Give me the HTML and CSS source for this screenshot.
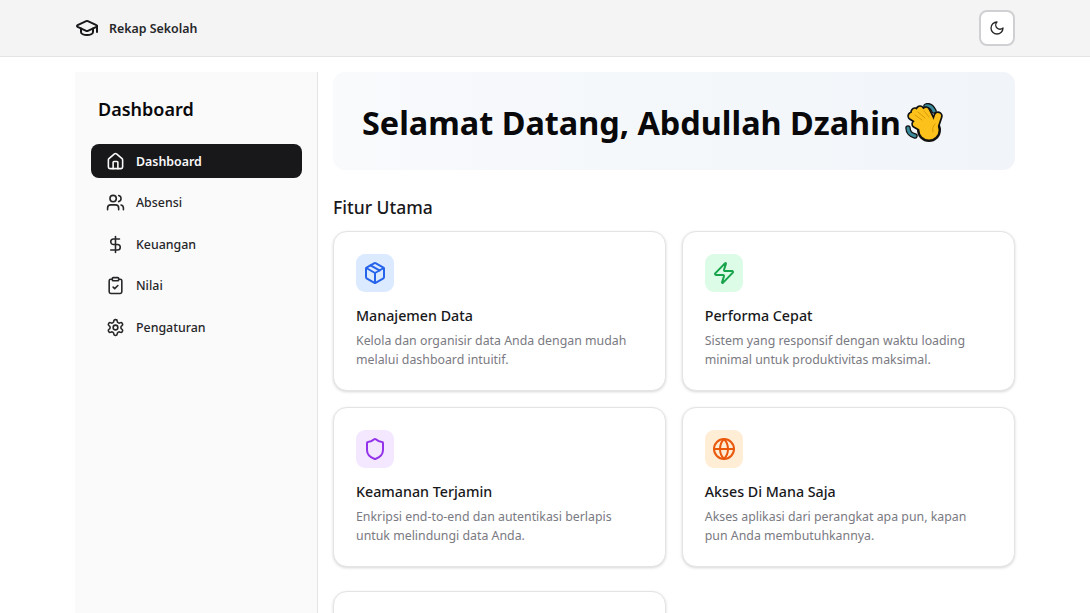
FILE: index.html
```html
<!DOCTYPE html>
<html lang="id">
<head>
    <meta charset="UTF-8">
    <meta name="viewport" content="width=device-width, initial-scale=1.0">
    <title>Rekap Sekolah</title>
    <link rel="stylesheet" href="styles.css">
</head>
<body>
    <header class="topbar">
        <div class="brand">
            <svg class="icon brand-icon" viewBox="0 0 24 24"><path d="M21.42 10.922a1 1 0 0 0-.019-1.838L12.83 5.18a2 2 0 0 0-1.66 0L2.6 9.08a1 1 0 0 0 0 1.832l8.57 3.908a2 2 0 0 0 1.66 0z"/><path d="M22 10v6"/><path d="M6 12.5V16a6 3 0 0 0 12 0v-3.5"/></svg>
            <span>Rekap Sekolah</span>
        </div>
        <button class="theme-btn">
            <svg class="icon" viewBox="0 0 24 24"><path d="M12 3a6 6 0 0 0 9 9 9 9 0 1 1-9-9Z"/></svg>
        </button>
    </header>

    <div class="layout">
        <aside class="sidebar">
            <h2 class="sidebar-title">Dashboard</h2>
            <nav class="nav">
                <a class="nav-item active">
                    <svg class="icon" viewBox="0 0 24 24"><path d="M15 21v-8a1 1 0 0 0-1-1h-4a1 1 0 0 0-1 1v8"/><path d="M3 10a2 2 0 0 1 .709-1.528l7-5.999a2 2 0 0 1 2.582 0l7 5.999A2 2 0 0 1 21 10v9a2 2 0 0 1-2 2H5a2 2 0 0 1-2-2z"/></svg>
                    Dashboard
                </a>
                <a class="nav-item">
                    <svg class="icon" viewBox="0 0 24 24"><path d="M16 21v-2a4 4 0 0 0-4-4H6a4 4 0 0 0-4 4v2"/><circle cx="9" cy="7" r="4"/><path d="M22 21v-2a4 4 0 0 0-3-3.87"/><path d="M16 3.13a4 4 0 0 1 0 7.75"/></svg>
                    Absensi
                </a>
                <a class="nav-item">
                    <svg class="icon" viewBox="0 0 24 24"><line x1="12" x2="12" y1="2" y2="22"/><path d="M17 5H9.5a3.5 3.5 0 0 0 0 7h5a3.5 3.5 0 0 1 0 7H6"/></svg>
                    Keuangan
                </a>
                <a class="nav-item">
                    <svg class="icon" viewBox="0 0 24 24"><rect width="8" height="4" x="8" y="2" rx="1"/><path d="M16 4h2a2 2 0 0 1 2 2v14a2 2 0 0 1-2 2H6a2 2 0 0 1-2-2V6a2 2 0 0 1 2-2h2"/><path d="m9 14 2 2 4-4"/></svg>
                    Nilai
                </a>
                <a class="nav-item">
                    <svg class="icon" viewBox="0 0 24 24"><path d="M12.22 2h-.44a2 2 0 0 0-2 2v.18a2 2 0 0 1-1 1.73l-.43.25a2 2 0 0 1-2 0l-.15-.08a2 2 0 0 0-2.73.73l-.22.38a2 2 0 0 0 .73 2.73l.15.1a2 2 0 0 1 1 1.72v.51a2 2 0 0 1-1 1.74l-.15.09a2 2 0 0 0-.73 2.73l.22.38a2 2 0 0 0 2.73.73l.15-.08a2 2 0 0 1 2 0l.43.25a2 2 0 0 1 1 1.73V20a2 2 0 0 0 2 2h.44a2 2 0 0 0 2-2v-.18a2 2 0 0 1 1-1.73l.43-.25a2 2 0 0 1 2 0l.15.08a2 2 0 0 0 2.73-.73l.22-.39a2 2 0 0 0-.73-2.73l-.15-.08a2 2 0 0 1-1-1.74v-.5a2 2 0 0 1 1-1.74l.15-.09a2 2 0 0 0 .73-2.73l-.22-.38a2 2 0 0 0-2.73-.73l-.15.08a2 2 0 0 1-2 0l-.43-.25a2 2 0 0 1-1-1.73V4a2 2 0 0 0-2-2z"/><circle cx="12" cy="12" r="3"/></svg>
                    Pengaturan
                </a>
            </nav>
        </aside>

        <main class="content">
            <section class="welcome">
                <h1>Selamat Datang, Abdullah Dzahin</h1>
                <svg class="wave" viewBox="0 0 38 39">
                    <g fill="none" stroke-linecap="round">
                        <path d="M21 3c3-1 6 1 8 5" stroke="#111" stroke-width="5.5"/>
                        <path d="M3 25c0 4 3 7 7 8" stroke="#111" stroke-width="5.5"/>
                        <path d="M21 3c3-1 6 1 8 5" stroke="#3a8a9c" stroke-width="3"/>
                        <path d="M3 25c0 4 3 7 7 8" stroke="#3a8a9c" stroke-width="3"/>
                        <g stroke="#111" stroke-width="9.5">
                            <path d="M20 21 7 13"/>
                            <path d="M22 19 10 9"/>
                            <path d="M24 18 15 7"/>
                            <path d="M27 20 21 8"/>
                            <path d="M29 25 33 13"/>
                            <path d="M18 25 11 21"/>
                        </g>
                        <circle cx="24" cy="27" r="12" fill="#111"/>
                        <circle cx="24" cy="27" r="9.6" fill="#fcc21b"/>
                        <g stroke="#fcc21b" stroke-width="6">
                            <path d="M20 21 7 13"/>
                            <path d="M22 19 10 9"/>
                            <path d="M24 18 15 7"/>
                            <path d="M27 20 21 8"/>
                            <path d="M29 25 33 13"/>
                            <path d="M18 25 11 21"/>
                        </g>
                        <g stroke="#d99a0b" stroke-width="1">
                            <path d="M17 17 10 12"/>
                            <path d="M20 15 13 9"/>
                            <path d="M24 14 19 8"/>
                            <path d="M30 21c-2 2-3 5-2 8"/>
                        </g>
                    </g>
                </svg>
            </section>

            <h2 class="section-title">Fitur Utama</h2>
            <div class="feature-grid">
                <div class="card">
                    <div class="card-icon blue">
                        <svg class="icon" viewBox="0 0 24 24"><path d="m7.5 4.27 9 5.15"/><path d="M21 8a2 2 0 0 0-1-1.73l-7-4a2 2 0 0 0-2 0l-7 4A2 2 0 0 0 3 8v8a2 2 0 0 0 1 1.73l7 4a2 2 0 0 0 2 0l7-4A2 2 0 0 0 21 16Z"/><path d="m3.3 7 8.7 5 8.7-5"/><path d="M12 22V12"/></svg>
                    </div>
                    <h3>Manajemen Data</h3>
                    <p>Kelola dan organisir data Anda dengan mudah melalui dashboard intuitif.</p>
                </div>
                <div class="card">
                    <div class="card-icon green">
                        <svg class="icon" viewBox="0 0 24 24"><path d="M4 14a1 1 0 0 1-.78-1.63l9.9-10.2a.5.5 0 0 1 .86.46l-1.92 6.02A1 1 0 0 0 13 10h7a1 1 0 0 1 .78 1.63l-9.9 10.2a.5.5 0 0 1-.86-.46l1.92-6.02A1 1 0 0 0 11 14z"/></svg>
                    </div>
                    <h3>Performa Cepat</h3>
                    <p>Sistem yang responsif dengan waktu loading minimal untuk produktivitas maksimal.</p>
                </div>
                <div class="card">
                    <div class="card-icon purple">
                        <svg class="icon" viewBox="0 0 24 24"><path d="M20 13c0 5-3.5 7.5-7.66 8.95a1 1 0 0 1-.67-.01C7.5 20.5 4 18 4 13V6a1 1 0 0 1 1-1c2 0 4.5-1.2 6.24-2.72a1.17 1.17 0 0 1 1.52 0C14.51 3.81 17 5 19 5a1 1 0 0 1 1 1z"/></svg>
                    </div>
                    <h3>Keamanan Terjamin</h3>
                    <p>Enkripsi end-to-end dan autentikasi berlapis untuk melindungi data Anda.</p>
                </div>
                <div class="card">
                    <div class="card-icon orange">
                        <svg class="icon" viewBox="0 0 24 24"><circle cx="12" cy="12" r="10"/><path d="M12 2a14.5 14.5 0 0 0 0 20 14.5 14.5 0 0 0 0-20"/><path d="M2 12h20"/></svg>
                    </div>
                    <h3>Akses Di Mana Saja</h3>
                    <p>Akses aplikasi dari perangkat apa pun, kapan pun Anda membutuhkannya.</p>
                </div>
                <div class="card card-next"></div>
            </div>
        </main>
    </div>
</body>
</html>
```

FILE: styles.css
```css
* {
    box-sizing: border-box;
}

html, body {
    height: 100%;
    overflow: hidden;
}

body {
    margin: 0;
    font-family: "Noto Sans", "Open Sans", Arial, sans-serif;
    color: #18181b;
    background: #fff;
    display: flex;
    flex-direction: column;
}

.icon {
    width: 20px;
    height: 20px;
    flex-shrink: 0;
    fill: none;
    stroke: currentColor;
    stroke-width: 2;
    stroke-linecap: round;
    stroke-linejoin: round;
}

/* Top bar */
.topbar {
    height: 57px;
    flex-shrink: 0;
    padding: 0 75px;
    display: flex;
    align-items: center;
    justify-content: space-between;
    background: #f4f4f5;
    border-bottom: 1px solid #e4e4e7;
}

.brand {
    display: flex;
    align-items: center;
    gap: 10px;
    font-size: 12.4px;
    font-weight: 600;
    color: #27272a;
}

.brand-icon {
    width: 24px;
    height: 24px;
    color: #18181b;
}

.theme-btn {
    width: 36px;
    height: 36px;
    padding: 0;
    display: flex;
    align-items: center;
    justify-content: center;
    color: #27272a;
    background: #fff;
    border: 2px solid #d0d0d4;
    border-radius: 8px;
}

.theme-btn .icon {
    width: 16px;
    height: 16px;
}

/* Page layout */
.layout {
    flex: 1;
    min-height: 0;
    padding: 15px 75.5px 0 75px;
    display: flex;
    gap: 15px;
}

.sidebar {
    width: 243px;
    flex-shrink: 0;
    padding: 24px 15px 24px 16px;
    background: #fafafa;
    border-right: 1px solid #e4e4e7;
}

.sidebar-title {
    margin: 0 0 22px 7px;
    font-size: 18px;
    line-height: 26px;
    font-weight: 600;
    color: #09090b;
}

.nav {
    display: flex;
    flex-direction: column;
    gap: 7.5px;
}

.nav-item {
    height: 34px;
    padding: 0 15px;
    display: flex;
    align-items: center;
    gap: 11px;
    font-size: 12.4px;
    font-weight: 500;
    color: #27272a;
    border-radius: 8px;
}

.nav-item .icon {
    width: 19px;
    height: 19px;
}

.nav-item.active {
    color: #fafafa;
    background: #18181b;
    font-weight: 600;
}

/* Main content */
.content {
    flex: 1;
    min-width: 0;
}

.welcome {
    height: 98px;
    padding: 2px 29px 0;
    display: flex;
    align-items: center;
    gap: 4px;
    border-radius: 12px;
    background: linear-gradient(to right, #f8fafc, #f1f5f9);
}

.welcome h1 {
    margin: 0;
    font-size: 32.4px;
    font-weight: 700;
    color: #09090b;
    white-space: nowrap;
}

.wave {
    width: 38px;
    height: 39px;
    flex-shrink: 0;
}

.section-title {
    margin: 25px 0 12px;
    font-size: 17.5px;
    line-height: 24px;
    font-weight: 500;
    color: #18181b;
}

.feature-grid {
    display: grid;
    grid-template-columns: 1fr 1fr;
    gap: 16px;
}

.card {
    height: 160px;
    padding: 22px;
    background: #fff;
    border: 1px solid #e4e4e7;
    border-radius: 14px;
    box-shadow: 0 1px 3px rgba(0, 0, 0, 0.16);
}

.card-next {
    margin-top: 8px;
}

.card-icon {
    width: 38px;
    height: 38px;
    margin-bottom: 14px;
    display: flex;
    align-items: center;
    justify-content: center;
    border-radius: 9px;
}

.card-icon .icon {
    width: 24px;
    height: 24px;
}

.blue { background: #dbeafe; color: #2563eb; }
.green { background: #dcfce7; color: #16a34a; }
.purple { background: #f3e8ff; color: #9333ea; }
.orange { background: #ffedd5; color: #ea580c; }

.card h3 {
    margin: 0 0 5px;
    font-size: 14.25px;
    line-height: 20px;
    font-weight: 500;
    color: #18181b;
}

.card p {
    margin: 0;
    font-size: 12.35px;
    line-height: 19px;
    color: #7a7a82;
}
```
